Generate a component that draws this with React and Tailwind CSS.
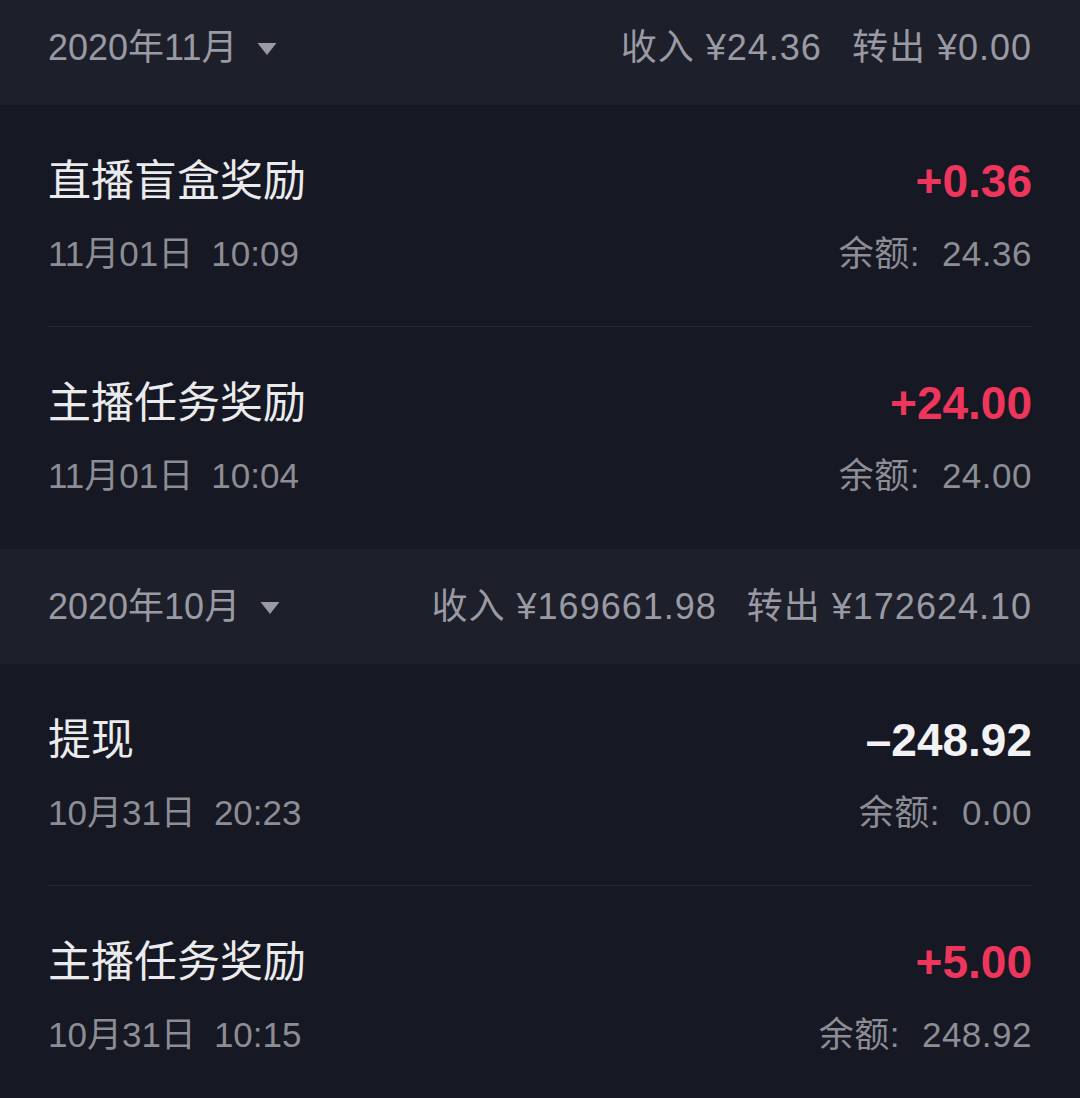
import React from 'react';

const FONT = { fontFamily: '"Liberation Sans", "Noto Sans CJK SC", sans-serif' };

const GROUPS = [
  {
    month: '2020年11月',
    income: '¥24.36',
    out: '¥0.00',
    first: true,
    items: [
      { title: '直播盲盒奖励', date: '11月01日', clock: '10:09', amount: '+0.36', balance: '24.36' },
      { title: '主播任务奖励', date: '11月01日', clock: '10:04', amount: '+24.00', balance: '24.00' },
    ],
  },
  {
    month: '2020年10月',
    income: '¥169661.98',
    out: '¥172624.10',
    items: [
      { title: '提现', date: '10月31日', clock: '20:23', amount: '\u2013248.92', balance: '0.00' },
      { title: '主播任务奖励', date: '10月31日', clock: '10:15', amount: '+5.00', balance: '248.92' },
    ],
  },
];

function MonthHeader({ g }) {
  return (
    <div className={`bg-[#1d1f2a] px-12 flex items-center justify-between text-[36px] text-[#999aa3] ${g.first ? 'h-[105px] pb-[10px]' : 'h-[115px]'}`}>
      <div className="flex items-center">
        <span>{g.month}</span>
        <svg width="20" height="14" viewBox="0 0 20 14" className="ml-[20px] mt-[2px]">
          <path d="M0.5 1 H19.5 L10 13 Z" fill="#999aa3" />
        </svg>
      </div>
      <div className="flex items-center gap-[30px] tracking-[1px]">
        <span>收入 {g.income}</span>
        <span>转出 {g.out}</span>
      </div>
    </div>
  );
}

function Row({ item, last }) {
  const income = item.amount.startsWith('+');
  return (
    <div className="px-12">
      <div className={`h-[222px] flex flex-col justify-center ${last ? '' : 'border-b border-[#262833]'}`}>
        <div className="flex items-center justify-between h-[52px]">
          <span className="text-[43px] text-[#ebebed]">{item.title}</span>
          <span className={`text-[46px] font-semibold ${income ? 'text-[#ee365d]' : 'text-[#f2f2f4]'}`}>{item.amount}</span>
        </div>
        <div className="flex items-center justify-between h-[44px] mt-[25px] text-[35px] text-[#8c8d95]">
          <span>
            {item.date}
            <span className="ml-[18px]">{item.clock}</span>
          </span>
          <span className="tracking-[0.5px]">
            余额:<span className="ml-[22px]">{item.balance}</span>
          </span>
        </div>
      </div>
    </div>
  );
}

export default function App() {
  return (
    <div className="w-[1080px] h-[1098px] overflow-hidden bg-[#161823]" style={FONT}>
      {GROUPS.map((g) => (
        <div key={g.month}>
          <MonthHeader g={g} />
          {g.items.map((it, i) => (
            <Row key={i} item={it} last={i === g.items.length - 1} />
          ))}
        </div>
      ))}
    </div>
  );
}
